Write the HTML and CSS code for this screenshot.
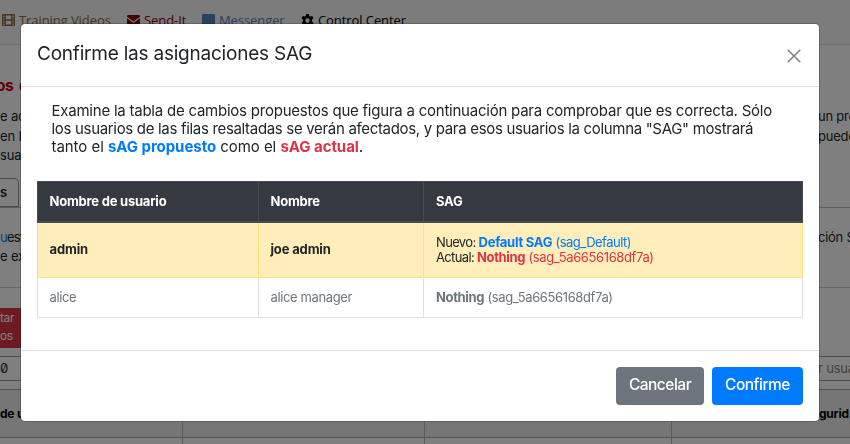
FILE: index.html
```html
<!DOCTYPE html>
<html lang="es">
<head>
<meta charset="utf-8">
<title>Confirme las asignaciones SAG</title>
<link rel="stylesheet" href="styles.css">
</head>
<body>
<div class="page">
  <nav class="nav">
    <span class="nav-item videos">
      <svg width="13" height="12" viewBox="0 0 13 12"><path fill="currentColor" fill-rule="evenodd" d="M1 0h11a1 1 0 0 1 1 1v10a1 1 0 0 1-1 1H1a1 1 0 0 1-1-1V1a1 1 0 0 1 1-1ZM1.2 1.5v1.7h1.3V1.5Zm0 3v1.2h1.3V4.500Zm0 2.500v1.300h1.300V7Zm0 2.600v1.300h1.300V9.600ZM3.800 1.400v3.900h5.400V1.400Zm0 5.300v3.900h5.400V6.700ZM10.500 1.500v1.700h1.300V1.500Zm0 3v1.200h1.300V4.500Zm0 2.500v1.300h1.300V7Zm0 2.600v1.300h1.300V9.600Z"/></svg><span>Training Videos</span>
    </span>
    <span class="nav-item send">
      <svg width="13" height="11" viewBox="0 0 13 11"><path fill="currentColor" d="M0 1Q0 0 1 0h11q1 0 1 1v.8L6.500 6.500 0 1.800ZM0 3.300l6.500 4.700L13 3.300V10q0 1-1 1H1q-1 0-1-1Z"/></svg><span>Send-It</span>
    </span>
    <span class="nav-item messenger">
      <svg width="13" height="13" viewBox="0 0 13 13"><path fill="currentColor" d="M1 0h11q1 0 1 1v9q0 1-1 1H9L7 13l-1-2H1q-1 0-1-1V1q0-1 1-1Z"/></svg><span>Messenger</span>
    </span>
    <span class="nav-item control">
      <svg width="13" height="13" viewBox="0 0 13 13"><path fill="currentColor" fill-rule="evenodd" d="M5.200 0h2.600l.4 1.900 1.100.6L11.200 1.900l1.300 2.300-1.500 1.300v1.900l1.500 1.300-1.300 2.300-1.900-.6-1.100.6-.4 2H5.200l-.4-2-1.100-.6-1.900.6L.5 8.700 2 7.400V5.500L.5 4.200l1.300-2.300 1.900.6 1.100-.6ZM6.500 4.300a2.200 2.200 0 1 0 0 4.400 2.200 2.200 0 1 0 0-4.400Z"/></svg><span>Control Center</span>
    </span>
  </nav>
  <h1 class="page-title">os d</h1>
  <div class="intro">
    <div class="line"><span>e ac</span><span class="right">un pro</span></div>
    <div class="line"><span>en L</span><span class="right">puede</span></div>
    <div class="line"><span>sua</span></div>
  </div>
  <div class="tabs"><span class="tab">s</span></div>
  <div class="note">
    <div class="line"><span class="tight"><span class="link">u</span>est</span><span class="right">ción S</span></div>
    <div class="line"><span>e ex</span></div>
  </div>
  <div class="tools"><div class="danger"><span>tar</span><span>os</span></div></div>
  <div class="fields"><span class="zero">0</span><span class="right hint">r usua</span></div>
  <div class="grid-head"><span>de u</span><span></span><span></span><span class="seg">egurid</span></div>
  <div class="grid-row"><span></span><span></span><span></span><span></span></div>
</div>
<div class="backdrop">
  <section class="modal">
    <header class="modal-head">
      <h2>Confirme las asignaciones SAG</h2>
      <svg class="close" width="14" height="14" viewBox="0 0 14 14"><path d="M.7.7l12.600 12.600M13.300.7.700 13.300" stroke="currentColor" stroke-width="1.500" fill="none"/></svg>
    </header>
    <div class="modal-body">
      <div class="message">
        <div class="m1">Examine la tabla de cambios propuestos que figura a continuación para comprobar que es correcta. Sólo</div>
        <div class="m2">los usuarios de las filas resaltadas se verán afectados, y para esos usuarios la columna "SAG" mostrará</div>
        <div class="m3">tanto el <b class="blue">sAG propuesto</b> como el <b class="red">sAG actual</b>.</div>
      </div>
      <div class="table">
        <div class="row head"><div>Nombre de usuario</div><div>Nombre</div><div>SAG</div></div>
        <div class="row hot"><div><b>admin</b></div><div><b>joe admin</b></div>
          <div class="stack"><span class="new"><span class="label">Nuevo: </span><span class="blue"><b>Default SAG</b> (sag_Default)</span></span><span class="current"><span class="label">Actual: </span><span class="red"><b>Nothing</b> (sag_5a6656168df7a)</span></span></div></div>
        <div class="row muted"><div>alice</div><div>alice manager</div><div><span><b>Nothing</b> (sag_5a6656168df7a)</span></div></div>
      </div>
    </div>
    <footer class="modal-foot"><button class="btn cancel">Cancelar</button><button class="btn confirm">Confirme</button></footer>
  </section>
</div>
</body>
</html>
```
FILE: styles.css
```css
* { box-sizing: border-box; }
body { margin: 0; height: 444px; overflow: hidden; color: #212529; font: 13px/15px Inter, "Liberation Sans", sans-serif; }
.page { height: 444px; overflow: hidden; background: #fff; }
.nav { display: flex; height: 45px; padding-top: 11px; background: #f8f8f8; border-bottom: 1px solid #e2e2e2; font: 13px/18px "Open Sans", sans-serif; letter-spacing: -.08px; }
.nav-item { display: flex; align-items: center; gap: 4px; height: 18px; white-space: nowrap; }
.videos { margin-left: 2px; width: 125px; color: #8a6d3b; }
.send { width: 75px; color: #8b0000; }
.messenger { width: 99px; color: #4e83bd; }
.control { color: #000; }
.page-title { height: 28px; margin: 27px 0 0 -4px; color: #c00010; font-size: 15.500px; line-height: 27px; font-weight: 700; letter-spacing: -.6px; word-spacing: 3px; }
.intro { padding-top: 7px; }
.line { display: flex; height: 19.500px; line-height: 19.500px; white-space: nowrap; letter-spacing: -.15px; }
.tight { letter-spacing: -.8px; }
.right { width: 32px; margin-left: auto; white-space: nowrap; letter-spacing: -.25px; }
.tabs { height: 42px; padding-top: 12px; border-bottom: 1px solid #bbb; }
.tab { display: block; width: 19px; height: 29px; border: 1px solid #999; border-left: 0; border-radius: 0 5px 0 0; line-height: 26px; font-weight: 600; }
.note { height: 80px; padding-top: 20px; border-bottom: 1px solid #ccc; }
.link { color: #007bff; }
.tools { height: 68px; padding-top: 20px; }
.danger { display: flex; flex-direction: column; width: 60px; height: 40px; padding-top: 1px; background: #dc3545; color: #fff; font-size: 12px; line-height: 18px; letter-spacing: -.4px; }
.fields { display: flex; height: 25px; border: 1px solid #999; border-width: 1px 0; line-height: 23px; }
.zero { font-feature-settings: "zero"; }
.hint { color: #888; letter-spacing: -.2px; }
.grid-head, .grid-row { display: grid; grid-template-columns: 182px 242px 247px 1fr; }
.grid-head { height: 49px; margin-top: 8px; background: #ececec; border: 1px solid #aaa; border-width: 1px 0; color: #000; font-size: 12px; font-weight: 700; line-height: 47px; letter-spacing: -.2px; }
.grid-row { height: 8px; }
.grid-head span + span, .grid-row span + span { border-left: 1px solid #bbb; }
.grid-head .seg { padding-left: 140px; }
.backdrop { position: fixed; inset: 0; padding: 23px 30px 0 20px; background: rgba(0,0,0,.5); }
.modal { width: 800px; height: 399px; background: #fff; background-clip: padding-box; border: 1px solid rgba(0,0,0,.2); border-radius: 5px; }
.modal-head { display: flex; justify-content: space-between; height: 63px; padding: 16px; border-bottom: 1px solid #dee2e6; }
h2 { margin: 0; font: 400 19px/28px Inter, sans-serif; letter-spacing: -.22px; }
.close { margin: 9px 2.500px 0 0; color: #7f7f7f; }
.modal-body { height: 263px; padding: 16px; }
.message { margin-top: -1px; padding-left: 14.500px; height: 79px; font-size: 15px; line-height: 18px; white-space: nowrap; }
.m1 { letter-spacing: -.23px; }
.m2 { letter-spacing: -.32px; }
.m3 { letter-spacing: -.05px; }
.blue { color: #007bff; }
.red { color: #dc3545; }
.table { border: 1px solid #dee2e6; border-top: 0; letter-spacing: -.38px; }
.table b { letter-spacing: -.35px; }
.row { display: grid; grid-template-columns: 221px 165px 1fr; white-space: nowrap; margin: 0 -1px; }
.row > div { display: flex; align-items: center; padding: 0 11.500px 1px; border-left: 1px solid #dee2e6; }
.row > div:last-child { padding-left: 12px; border-right: 1px solid #dee2e6; }
.row.head { height: 42px; background: #343a40; color: #fff; font-weight: 700; letter-spacing: -.22px; border-top: 1px solid #454d55; border-bottom: 2px solid #454d55; }
.row.head > div { border-color: #454d55; }
.row.hot { height: 55px; background: #ffeeba; border-bottom: 1px solid #ffdf7e; }
.row.hot > div { border-color: #ffdf7e; }
.row.hot > div > b { letter-spacing: -.15px; }
.row .stack { flex-direction: column; align-items: flex-start; justify-content: center; }
.stack .label { letter-spacing: -.65px; }
.new .blue { letter-spacing: -.5px; }
.stack .new b { letter-spacing: -.25px; }
.row.muted { height: 39px; color: #6c757d; }
.modal-foot { display: flex; justify-content: flex-end; gap: 8px; height: 71px; padding: 16px; border-top: 1px solid #dee2e6; }
.btn { height: 38px; padding: 0 0 2px; border: 0; border-radius: 4px; color: #fff; font: 500 15.500px/24px Inter, sans-serif; letter-spacing: -.5px; }
.cancel { width: 88px; background: #6c757d; }
.confirm { width: 91px; background: #007bff; }
```
